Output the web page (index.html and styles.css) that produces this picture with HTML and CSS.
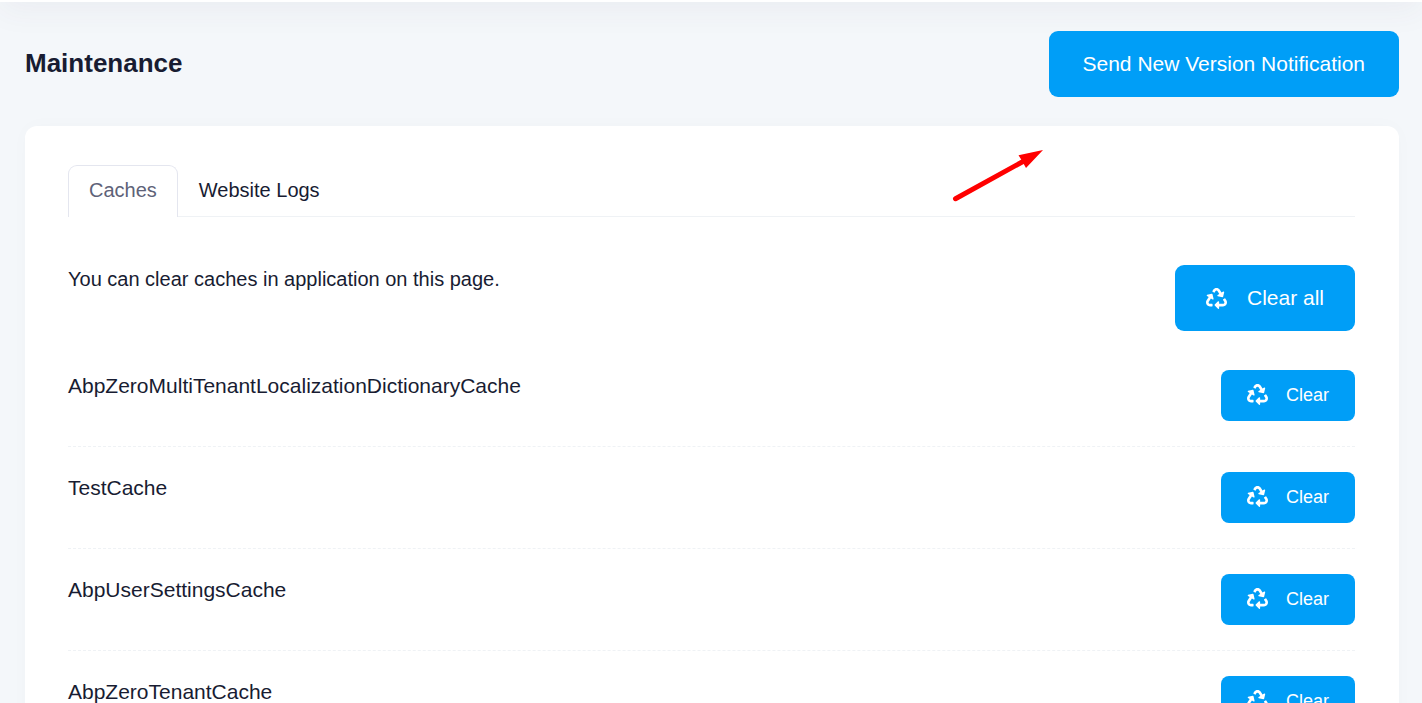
FILE: index.html
```html
<!DOCTYPE html>
<html lang="en">
<head>
<meta charset="utf-8">
<title>Maintenance</title>
<link rel="stylesheet" href="styles.css">
</head>
<body>
<svg class="sprite" aria-hidden="true">
  <symbol id="recycle" viewBox="0 0 512 512"><path d="M184.561 261.903c3.232 13.997-12.123 24.635-24.068 17.168l-40.736-25.455-50.867 81.402C55.606 356.273 70.96 384 96.012 384H148c6.627 0 12 5.373 12 12v40c0 6.627-5.373 12-12 12H96.115c-75.334 0-121.302-83.048-81.408-146.88l50.822-81.388-40.725-25.448c-12.081-7.547-8.966-25.961 4.879-29.158l110.237-25.45c8.611-1.988 17.201 3.381 19.189 11.99l25.452 110.237zm98.561-182.915l41.289 66.076-40.74 25.457c-12.051 7.528-9 25.953 4.879 29.158l110.237 25.45c8.672 1.999 17.215-3.438 19.189-11.99l25.45-110.237c3.197-13.844-11.99-24.719-24.068-17.168l-40.687 25.424-41.263-66.082c-37.521-60.033-125.209-60.171-162.816 0l-17.963 28.766c-3.51 5.62-1.8 13.021 3.82 16.533l33.919 21.195c5.62 3.512 13.024 1.803 16.536-3.817l17.961-28.743c12.712-20.341 41.973-19.676 54.257-.022zM497.288 301.12l-27.515-44.065c-3.511-5.623-10.916-7.334-16.538-3.821l-33.861 21.159c-5.62 3.512-7.33 10.915-3.818 16.536l27.564 44.112c13.257 21.211-2.057 48.96-27.136 48.96H320V336.02c0-14.213-17.242-21.383-27.313-11.313l-80 79.981c-6.249 6.248-6.249 16.379 0 22.627l80 79.989C302.689 517.308 320 510.3 320 495.989V448h95.88c75.274 0 121.335-82.997 81.408-146.88z"/></symbol>
</svg>
<div class="topbar"></div>
<header class="page-header">
  <h1 class="title">Maintenance</h1>
  <button type="button" class="btn btn-wide">Send New Version Notification</button>
</header>
<main class="card">
  <nav class="tabs">
    <a class="tab tab-active" href="#caches">Caches</a>
    <a class="tab" href="#logs">Website Logs</a>
  </nav>
  <section id="caches">
    <div class="intro">
      <p class="intro-text">You can clear caches in application on this page.</p>
      <button type="button" class="btn"><svg class="icon" aria-hidden="true"><use href="#recycle"/></svg>Clear all</button>
    </div>
    <ul class="cache-list">
      <li class="cache"><span class="cache-name">AbpZeroMultiTenantLocalizationDictionaryCache</span><button type="button" class="btn btn-small"><svg class="icon" aria-hidden="true"><use href="#recycle"/></svg>Clear</button></li>
      <li class="cache"><span class="cache-name">TestCache</span><button type="button" class="btn btn-small"><svg class="icon" aria-hidden="true"><use href="#recycle"/></svg>Clear</button></li>
      <li class="cache"><span class="cache-name">AbpUserSettingsCache</span><button type="button" class="btn btn-small"><svg class="icon" aria-hidden="true"><use href="#recycle"/></svg>Clear</button></li>
      <li class="cache"><span class="cache-name">AbpZeroTenantCache</span><button type="button" class="btn btn-small"><svg class="icon" aria-hidden="true"><use href="#recycle"/></svg>Clear</button></li>
    </ul>
  </section>
  <svg class="arrow" viewBox="0 0 120 70" aria-hidden="true">
    <path d="M15.500 58.700 83 21.500" stroke="#f00" stroke-width="5" stroke-linecap="round"/>
    <path d="M103 10 78.500 15.300 81.500 20 86 28Z" fill="#f00"/>
  </svg>
</main>
</body>
</html>
```
FILE: styles.css
```css
* {
  box-sizing: border-box;
}

body {
  display: flow-root;
  margin: 0;
  height: 100vh;
  overflow: hidden;
  background: #f4f7fa;
  color: #181c32;
  font-family: "Liberation Sans", Arial, sans-serif;
}

.sprite {
  position: absolute;
  width: 0;
  height: 0;
}

/* The bar is mostly scrolled out of view; its shadow falls on the page. */
.topbar {
  height: 80px;
  margin-top: -78px;
  background: #fff;
  box-shadow: 0 10px 30px rgba(82, 63, 105, 0.05);
}

.page-header {
  display: flex;
  align-items: center;
  justify-content: space-between;
  padding: 29px 23px 29px 25px;
}

.title {
  margin: 0;
  padding-bottom: 2px;
  font-size: 26px;
  line-height: 32px;
}

.btn {
  display: flex;
  align-items: center;
  justify-content: center;
  gap: 20px;
  height: 66px;
  padding: 0 31px;
  border: 0;
  border-radius: 9px;
  background: #009ef7;
  color: #fff;
  font: 21px/32px "Liberation Sans", Arial, sans-serif;
  white-space: nowrap;
}

.btn-wide {
  padding: 0 34px;
}

.btn-small {
  height: 51px;
  padding: 0 26px 2px;
  gap: 18px;
  border-radius: 8px;
  font-size: 18px;
}

.icon {
  width: 21px;
  height: 21px;
  fill: currentColor;
}

.card {
  position: relative;
  min-height: 600px;
  margin: 0 23px 0 25px;
  padding: 39px 44px 39px 43px;
  border-radius: 12px;
  background: #fff;
  box-shadow: 0 0 20px rgba(76, 87, 125, 0.02);
}

.tabs {
  display: flex;
  border-bottom: 1px solid #eff2f5;
}

.tab {
  height: 52px;
  margin-bottom: -1px;
  padding: 8px 20px;
  border: 1px solid transparent;
  border-bottom: 0;
  border-radius: 9px 9px 0 0;
  color: #181c32;
  font-size: 20px;
  line-height: 32px;
  text-decoration: none;
}

.tab-active {
  border-color: #e4e6ef;
  background: #fff;
  color: #5e6278;
}

.intro {
  display: flex;
  justify-content: space-between;
  align-items: flex-start;
  padding: 48px 0 14px;
}

.intro-text {
  margin: 0;
  font-size: 20px;
  line-height: 28px;
}

.cache-list {
  margin: 0;
  padding: 0;
  list-style: none;
}

.cache {
  display: flex;
  justify-content: space-between;
  align-items: flex-start;
  padding: 25px 0;
  border-bottom: 1px dashed #eff2f5;
}

.cache-name {
  font-size: 21px;
  line-height: 32px;
}

.arrow {
  position: absolute;
  top: 14px;
  right: 339px;
  width: 120px;
  height: 70px;
}
```
